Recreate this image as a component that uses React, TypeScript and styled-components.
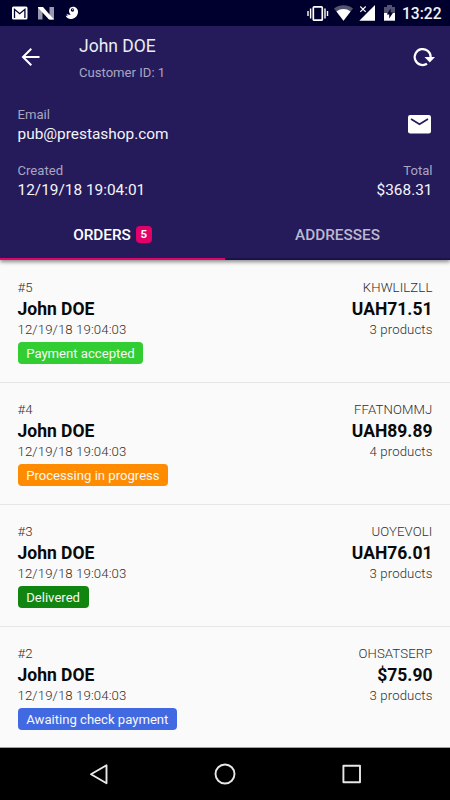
import React from 'react';
import styled, { createGlobalStyle } from 'styled-components';

const GlobalStyle = createGlobalStyle`
  * { box-sizing: border-box; }
  body { margin: 0; background: #fafafa; font-family: Roboto, sans-serif; }
`;

const Screen = styled.div`
  width: 450px;
  height: 800px;
  display: flex;
  flex-direction: column;
  overflow: hidden;
  background: #fafafa;
`;

const StatusBar = styled.div`
  height: 26px;
  flex: none;
  background: #00002e;
  display: flex;
  justify-content: space-between;
`;

const StatusText = styled.span`
  color: #f2f2f5;
  font-size: 15.6px;
  font-weight: 500;
  line-height: 28px;
  width: 48px;
`;

const StatusRight = styled.div`
  display: flex;
`;

const Header = styled.header`
  height: 234px;
  flex: none;
  position: relative;
  z-index: 1;
  background: #251b5b;
  display: flex;
  flex-direction: column;
  box-shadow: 0 2px 4px rgba(0, 0, 0, 0.45);
`;

const Toolbar = styled.div`
  height: 61px;
  display: flex;
  align-items: center;
  padding: 0 14px 0 19px;
`;

const TitleBlock = styled.div`
  flex: 1;
  padding-left: 36px;
`;

const Title = styled.h1`
  margin: 0;
  padding-top: 5px;
  font-size: 17.5px;
  font-weight: 400;
  line-height: 26px;
  color: #ececf2;
`;

const Subtitle = styled.div`
  font-size: 13.1px;
  line-height: 27px;
  color: #aaa6c1;
`;

const ContactRow = styled.div`
  height: 74px;
  display: flex;
  justify-content: space-between;
  padding: 18px 17.5px 0;
`;

const SummaryRow = styled.div`
  display: flex;
  justify-content: space-between;
  padding: 0 17.5px;
`;

const Info = styled.div<{ $end?: boolean }>`
  text-align: ${({ $end }) => ($end ? 'right' : 'left')};
`;

const Label = styled.div`
  font-size: 13.1px;
  line-height: 19px;
  color: #aaa6c1;
`;

const Value = styled.div`
  font-size: 15.4px;
  line-height: 20px;
  color: #f4f4f8;
`;

const Tabs = styled.div`
  height: 50px;
  margin-top: auto;
  display: flex;
`;

const Tab = styled.div<{ $active?: boolean }>`
  flex: 1;
  display: flex;
  justify-content: center;
  align-items: center;
  gap: 5px;
  padding-top: 2px;
  font-size: 15.3px;
  font-weight: 500;
  color: ${({ $active }) => ($active ? '#ffffff' : '#bcb8cd')};
  border-bottom: 2px solid ${({ $active }) => ($active ? '#e0056a' : '#1a1248')};
`;

const Count = styled.span`
  width: 16px;
  height: 17px;
  border-radius: 4px;
  background: #e3006a;
  font-size: 11.5px;
  font-weight: 700;
  line-height: 16px;
  text-align: center;
  color: #fff;
  margin-bottom: 2px;
`;

const List = styled.main`
  flex: 1;
  min-height: 0;
  overflow: hidden;
  padding-top: 1px;
  border-bottom: 1px solid #a0a0a0;
`;

const OrderRow = styled.article`
  height: 122px;
  display: flex;
  justify-content: space-between;
  padding: 17px 17.5px 0;
  border-bottom: 1px solid #e6e6e6;
`;

const Column = styled.div<{ $end?: boolean }>`
  display: flex;
  flex-direction: column;
  align-items: ${({ $end }) => ($end ? 'flex-end' : 'flex-start')};
`;

const Detail = styled.div`
  font-size: 13.2px;
  font-weight: 300;
  letter-spacing: 0.11px;
  line-height: 20px;
  color: #303030;
`;

const Strong = styled.div`
  font-size: 17.5px;
  font-weight: 700;
  line-height: 22px;
  color: #0a0a0a;
`;

const Status = styled.div<{ $color: string }>`
  height: 22px;
  margin-top: 2px;
  padding: 0 8.7px;
  border-radius: 4px;
  font-size: 13.12px;
  line-height: 23px;
  color: #f8f8f8;
  background: ${({ $color }) => $color};
`;

const NavBar = styled.nav`
  height: 52px;
  flex: none;
  background: #000;
`;

const orders = [
  { id: 5, ref: 'KHWLILZLL', total: 'UAH71.51', count: 3, status: 'Payment accepted', color: '#32cd32' },
  { id: 4, ref: 'FFATNOMMJ', total: 'UAH89.89', count: 4, status: 'Processing in progress', color: '#ff8c00' },
  { id: 3, ref: 'UOYEVOLI', total: 'UAH76.01', count: 3, status: 'Delivered', color: '#108510' },
  { id: 2, ref: 'OHSATSERP', total: '$75.90', count: 3, status: 'Awaiting check payment', color: '#4169e1' },
];

const NotificationIcons = () => (
  <svg width="90" height="26" viewBox="0 0 90 26">
    <rect x="12" y="6.500" width="15.500" height="13" rx="1.500" fill="#fff" />
    <path d="M14.500 18V9.300l5.200 4.400 5.200-4.400V18" fill="none" stroke="#00002e" strokeWidth="1.300" />
    <path d="M38 7h4.500v12.500H38zM49.500 7H54v12.500h-4.500z" fill="#9999ad" />
    <path d="M38 7h5l11 12.500h-5L38 7.800z" fill="#fff" />
    <path d="M70.500 7.500c4-2 8 1 7.500 5-.6 4.200-3.800 6.500-7.200 6.500-2.500 0-4.500-1.200-5.200-3.400l2.200.7-1.400-2.600c1.400 1 3 1.300 4.300.7-2-1.700-2.300-4.900-.2-6.900z" fill="#fff" />
    <circle cx="72.500" cy="10" r="1.700" fill="#00002e" />
    <circle cx="72.800" cy="9.700" r=".6" fill="#fff" />
  </svg>
);

const SystemIcons = () => (
  <svg width="96" height="26" viewBox="306 0 96 26">
    <rect x="313.300" y="6.800" width="9" height="13.400" rx="1" fill="none" stroke="#fff" strokeWidth="1.700" />
    <path d="M310.600 8.500v10M325 8.500v10M308 11v5M327.500 11v5" stroke="#fff" strokeWidth="1.400" />
    <path d="M334 8.500c5.500-4.300 13.500-4.300 19 0L343.500 20.700z" fill="#53536f" />
    <path d="M336.500 11.500c4-3.300 10-3.300 14 0l-7 9.200z" fill="#fff" />
    <path d="M375 5v15.700h-15.700z" fill="#fff" />
    <path d="M358 4h9v9h-9z" fill="#00002e" />
    <path d="M360.300 6.500l5.400 5.400M365.700 6.500l-5.400 5.400" stroke="#fff" strokeWidth="1.100" />
    <path d="M384 7h3V5h5v2h3v6h-11z" fill="#53536f" />
    <path d="M384 13h11v7.700h-11z" fill="#fff" />
    <path d="M390.700 8.500l-4 6h2.500v4l4-6h-2.500z" fill="#00002e" />
  </svg>
);

const BackIcon = () => (
  <svg width="24" height="24" viewBox="0 0 24 24" fill="none" stroke="#fff" strokeWidth="2">
    <path d="M20.500 12H4M12.300 3.800L4 12l8.300 8.200" />
  </svg>
);

const RefreshIcon = () => (
  <svg width="24" height="24" viewBox="412 45 24 24">
    <path d="M427 63.800A8 8 0 1 1 430.700 57" fill="none" stroke="#fff" strokeWidth="2.200" />
    <path d="M424.500 57H435l-5.200 5.500z" fill="#fff" />
  </svg>
);

const MailIcon = () => (
  <svg width="25" height="38" viewBox="408 105 25 38">
    <rect x="408" y="115" width="23" height="18.500" rx="2.200" fill="#fff" />
    <path d="M411 119l8.500 5.300 8.500-5.300" fill="none" stroke="#251b5b" strokeWidth="1.700" />
  </svg>
);

const NavIcons = () => (
  <svg width="450" height="52" viewBox="0 748 450 52" fill="none" stroke="#e8e8e8" strokeWidth="1.900" strokeLinejoin="round">
    <path d="M91 774.200l15.500-9v18z" />
    <circle cx="225" cy="774" r="9.500" />
    <rect x="343.400" y="765.800" width="16.600" height="16.400" />
  </svg>
);

export default function App() {
  return (
    <>
      <GlobalStyle />
      <Screen>
        <StatusBar>
          <NotificationIcons />
          <StatusRight>
            <SystemIcons />
            <StatusText>13:22</StatusText>
          </StatusRight>
        </StatusBar>
        <Header>
          <Toolbar>
            <BackIcon />
            <TitleBlock>
              <Title>John DOE</Title>
              <Subtitle>Customer ID: 1</Subtitle>
            </TitleBlock>
            <RefreshIcon />
          </Toolbar>
          <ContactRow>
            <Info>
              <Label>Email</Label>
              <Value>pub@prestashop.com</Value>
            </Info>
            <MailIcon />
          </ContactRow>
          <SummaryRow>
            <Info>
              <Label>Created</Label>
              <Value>12/19/18 19:04:01</Value>
            </Info>
            <Info $end>
              <Label>Total</Label>
              <Value>$368.31</Value>
            </Info>
          </SummaryRow>
          <Tabs>
            <Tab $active>
              ORDERS <Count>5</Count>
            </Tab>
            <Tab>ADDRESSES</Tab>
          </Tabs>
        </Header>
        <List>
          {orders.map((order) => (
            <OrderRow key={order.id}>
              <Column>
                <Detail>#{order.id}</Detail>
                <Strong>John DOE</Strong>
                <Detail>12/19/18 19:04:03</Detail>
                <Status $color={order.color}>{order.status}</Status>
              </Column>
              <Column $end>
                <Detail>{order.ref}</Detail>
                <Strong>{order.total}</Strong>
                <Detail>{order.count} products</Detail>
              </Column>
            </OrderRow>
          ))}
        </List>
        <NavBar>
          <NavIcons />
        </NavBar>
      </Screen>
    </>
  );
}
